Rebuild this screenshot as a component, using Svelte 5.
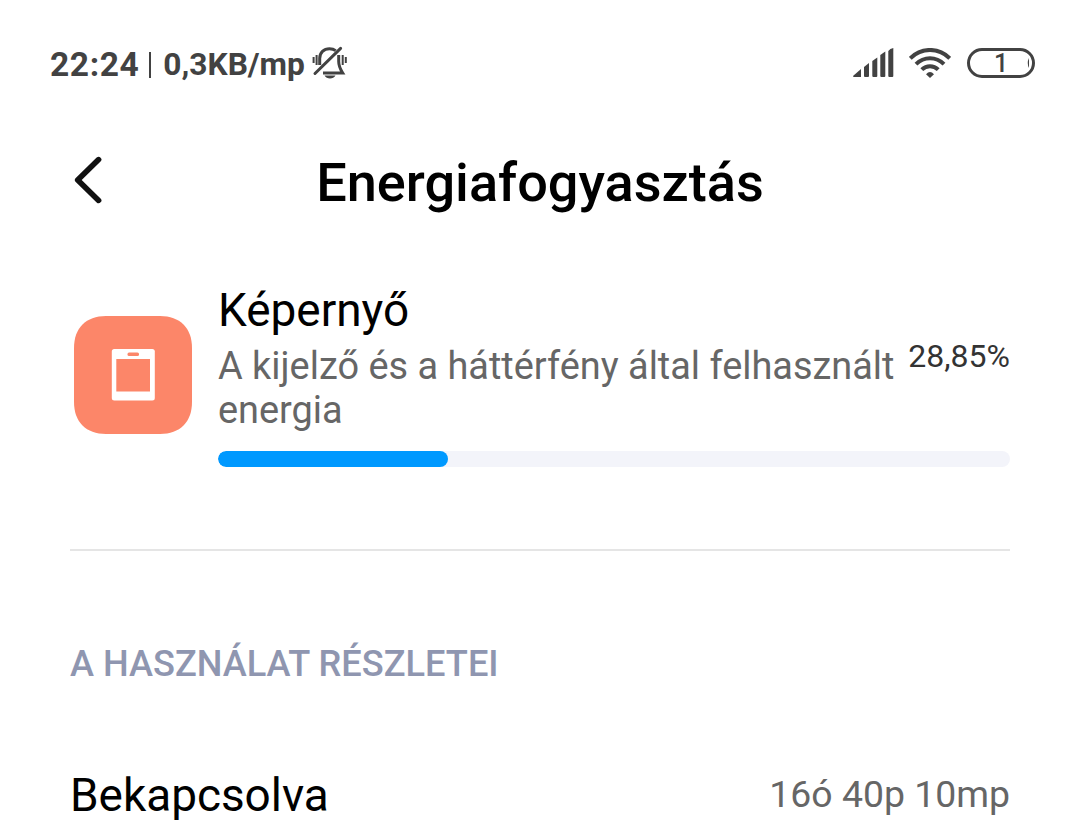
<script lang="ts">
	let time = '22:24';
	let speed = '0,3KB/mp';
	let battery = 1;
	let percent = 28.85;

	const details = [{ label: 'Bekapcsolva', value: '16ó 40p 10mp' }];

	$: percentText = percent.toFixed(2).replace('.', ',') + '%';
</script>

<div class="screen">
	<div class="status">
		<div class="status-left">
			<span class="time">{time}</span>
			<span class="separator"></span>
			<span class="speed">{speed}</span>
			<svg class="bell" width="36" height="34" viewBox="0 0 36 34" fill="none" stroke="#424242">
				<path d="M7.7 19V12.5C7.7 6.5 11.8 2.7 17.5 2.7C20 2.7 22 3.3 23.7 4.6" stroke-width="3" />
				<path d="M26.7 9V15.5C26.7 20.5 28.5 23.5 30.7 27H11" stroke-width="3" />
				<path d="M3 27.5L28.6 2.4" stroke-width="3" stroke-linecap="round" />
				<path d="M1.6 11V17M4.6 9V19M30.7 9V19M33.8 11V17" stroke-width="2" />
				<path d="M12.5 29.5H23.5C21.5 33.4 14.5 33.4 12.5 29.5Z" fill="#424242" stroke="none" />
			</svg>
		</div>
		<div class="status-right">
			<svg width="41" height="30" viewBox="0 0 41 30" fill="#424242">
				<path d="M0 28L8 21V29H1Q0 29 0 28Z" />
				<path d="M11 19L16 15V28Q16 29 15 29H12Q11 29 11 28Z" />
				<path d="M19.3 13L24.3 9.5V28Q24.3 29 23.3 29H20.3Q19.3 29 19.3 28Z" />
				<path d="M27.3 7L32.3 3.5V28Q32.3 29 31.3 29H28.3Q27.3 29 27.3 28Z" />
				<path d="M35.3 3Q37 .7 40.3 0V28Q40.3 29 39.3 29H36.3Q35.3 29 35.3 28Z" />
			</svg>
			<svg class="wifi" width="42" height="30" viewBox="0 0 42 30" fill="none" stroke="#424242" stroke-width="4">
				<path d="M1.3 10.2C12.5-.8 29.5-.8 40.7 10.2" />
				<path d="M7 16.2C15 8.3 27 8.3 35 16.2" />
				<path d="M12.8 21.7C17.5 17 24.5 17 29.2 21.7" />
				<path d="M17 26.2Q21 21.8 25 26.2L21 30Z" fill="#424242" stroke="none" />
			</svg>
			<div class="battery">
				<span>{battery}</span>
				<svg class="level" width="3" height="10" viewBox="0 0 3 10">
					<path d="M2 0Q-.5 5 2 10Z" fill="#424242" />
				</svg>
			</div>
		</div>
	</div>

	<header>
		<svg class="back" width="30" height="50" viewBox="0 0 30 50">
			<path
				d="M24.6 4.6L3.7 25L24.6 45.4"
				fill="none"
				stroke="#111"
				stroke-width="5.6"
				stroke-linecap="round"
				stroke-linejoin="round"
			/>
		</svg>
		<h1>Energiafogyasztás</h1>
	</header>

	<section class="usage">
		<svg class="app-icon" width="118" height="118" viewBox="0 0 118 118">
			<path
				d="M32 0H86C106 0 118 12 118 32V86C118 106 106 118 86 118H32C12 118 0 106 0 86V32C0 12 12 0 32 0Z"
				fill="#fc8669"
			/>
			<rect x="37.8" y="33" width="43" height="51.5" rx="2.5" fill="#fff" />
			<rect x="42.3" y="43" width="33.7" height="32.5" fill="#fc8669" />
			<rect x="53.5" y="36.5" width="11.5" height="3.6" rx="1.5" fill="#fc8669" />
		</svg>
		<div class="info">
			<h2>Képernyő</h2>
			<div class="summary">
				<p>A kijelző és a háttérfény által felhasznált energia</p>
				<span class="percent">{percentText}</span>
			</div>
			<div class="bar">
				<div class="fill" style="width: {percent}%"></div>
			</div>
		</div>
	</section>

	<hr />

	<h3>A HASZNÁLAT RÉSZLETEI</h3>

	{#each details as detail}
		<div class="detail">
			<span class="label">{detail.label}</span>
			<span class="value">{detail.value}</span>
		</div>
	{/each}
</div>

<style>
	:global(body) {
		margin: 0;
		background-color: #fff;
	}

	.screen {
		width: 1080px;
		height: 838px;
		overflow: hidden;
		background-color: #fff;
		font-family: Roboto, sans-serif;
		color: #000;
	}

	h1,
	h2,
	h3,
	p {
		margin: 0;
	}

	.status {
		display: flex;
		align-items: center;
		justify-content: space-between;
		box-sizing: border-box;
		height: 128px;
		padding: 0 45px 0 50px;
		color: #424242;
	}

	.status-left,
	.status-right {
		display: flex;
		align-items: center;
	}

	.status-right {
		margin-bottom: 2px;
	}

	.time {
		font-size: 33.5px;
		font-weight: 700;
		letter-spacing: 0.6px;
	}

	.separator {
		width: 2px;
		height: 26px;
		margin: 2px 12px 0 10px;
		background-color: #424242;
	}

	.speed {
		font-size: 31.7px;
		font-weight: 700;
	}

	.bell {
		margin: 0 0 2px 7px;
	}

	.wifi {
		margin: 0 16px 0 15px;
	}

	.battery {
		display: flex;
		align-items: center;
		justify-content: center;
		position: relative;
		box-sizing: border-box;
		width: 68px;
		height: 30px;
		border: 3px solid #424242;
		border-radius: 15px;
		font-size: 25px;
		font-weight: 500;
	}

	.level {
		position: absolute;
		right: 2px;
		top: 7px;
	}

	header {
		display: grid;
		grid-template-columns: 30px 1fr 30px;
		align-items: center;
		height: 110px;
		padding: 0 74px;
	}

	.back {
		margin-bottom: 6px;
	}

	h1 {
		font-size: 54.1px;
		font-weight: 500;
		line-height: 64px;
		text-align: center;
		white-space: nowrap;
	}

	.usage {
		display: flex;
		gap: 26px;
		padding: 45px 70px 0 74px;
	}

	.app-icon {
		flex: none;
		margin-top: 33px;
	}

	.info {
		flex: 1;
	}

	h2 {
		font-size: 45.9px;
		font-weight: 400;
		line-height: 54px;
	}

	.summary {
		display: flex;
		justify-content: space-between;
		margin-top: 7px;
	}

	.summary p {
		width: 680px;
		font-size: 37.9px;
		line-height: 44px;
		color: #666;
	}

	.percent {
		font-size: 32px;
		line-height: 25px;
		color: #333;
	}

	.bar {
		height: 16px;
		margin-top: 19px;
		border-radius: 8px;
		background-color: #f3f4fa;
		overflow: hidden;
	}

	.fill {
		height: 100%;
		padding-right: 1.5px;
		border-radius: 8px;
		background-color: #0099ff;
	}

	hr {
		height: 2px;
		margin: 82px 70px 0;
		border: none;
		background-color: #e5e5e5;
	}

	h3 {
		margin: 92px 70px 0;
		font-size: 36.2px;
		font-weight: 500;
		line-height: 42px;
		color: #8f96b0;
	}

	.detail {
		display: flex;
		align-items: center;
		justify-content: space-between;
		height: 110px;
		margin-top: 54px;
		padding: 0 70px;
	}

	.label {
		padding-top: 1px;
		font-size: 45.9px;
	}

	.value {
		font-size: 37.4px;
		color: #666;
	}
</style>
